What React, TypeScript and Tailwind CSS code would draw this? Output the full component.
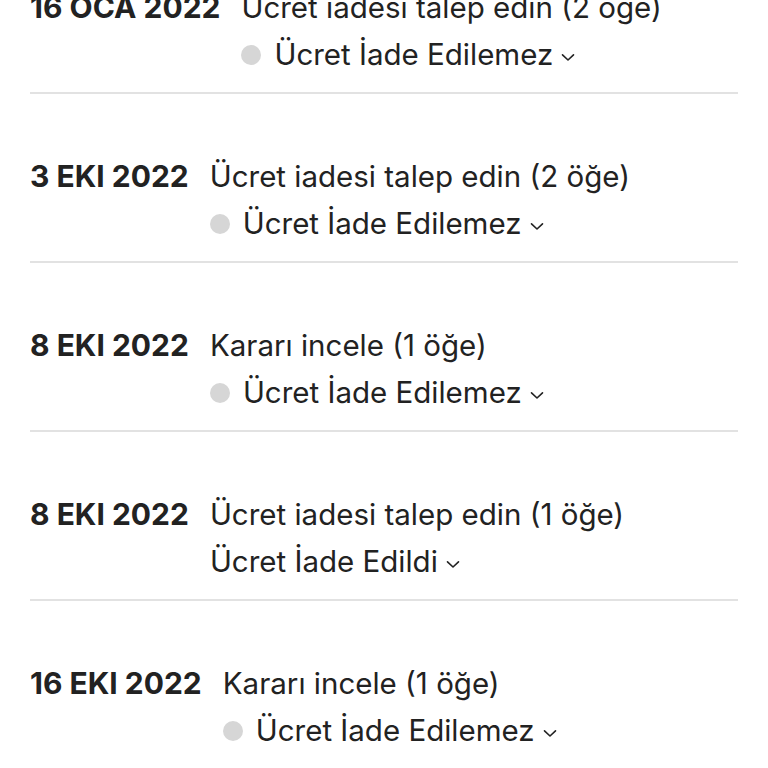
import React from "react";

type Row = { date: string; title: string; status: string; dot: boolean };

const rows: Row[] = [
  { date: "16 OCA 2022", title: "Ücret iadesi talep edin (2 öğe)", status: "Ücret İade Edilemez", dot: true },
  { date: "3 EKI 2022", title: "Ücret iadesi talep edin (2 öğe)", status: "Ücret İade Edilemez", dot: true },
  { date: "8 EKI 2022", title: "Kararı incele (1 öğe)", status: "Ücret İade Edilemez", dot: true },
  { date: "8 EKI 2022", title: "Ücret iadesi talep edin (1 öğe)", status: "Ücret İade Edildi", dot: false },
  { date: "16 EKI 2022", title: "Kararı incele (1 öğe)", status: "Ücret İade Edilemez", dot: true },
];

function Chevron() {
  return (
    <svg width="14" height="9" viewBox="0 0 14 9" className="ml-[8px] mt-[5px]">
      <path d="M1.5 1.8 L7 7 L12.5 1.8" fill="none" stroke="#222" strokeWidth="1.6" strokeLinecap="round" strokeLinejoin="round" />
    </svg>
  );
}

export default function App() {
  return (
    <div
      className="h-[768px] w-[768px] overflow-hidden bg-white text-[#222] px-[30px]"
      style={{ fontFamily: "Inter, 'Noto Sans', sans-serif" }}
    >
      <div className="-mt-[16px]">
        {rows.map((r, i) => (
          <div key={i} className={i === 0 ? "" : "border-t-2 border-[#e2e2e2] pt-[59px]"}>
            <div className="flex gap-[21px] pb-[14px] text-[29.5px] leading-[47px]">
              <div className="text-[30px] font-bold whitespace-nowrap">{r.date}</div>
              <div className="flex flex-col whitespace-nowrap">
                <div>{r.title}</div>
                <div className="flex items-center">
                  {r.dot && <span className="mr-[13px] h-[20px] w-[20px] rounded-full bg-[#d6d6d6]" />}
                  <span>{r.status}</span>
                  <Chevron />
                </div>
              </div>
            </div>
          </div>
        ))}
      </div>
    </div>
  );
}
